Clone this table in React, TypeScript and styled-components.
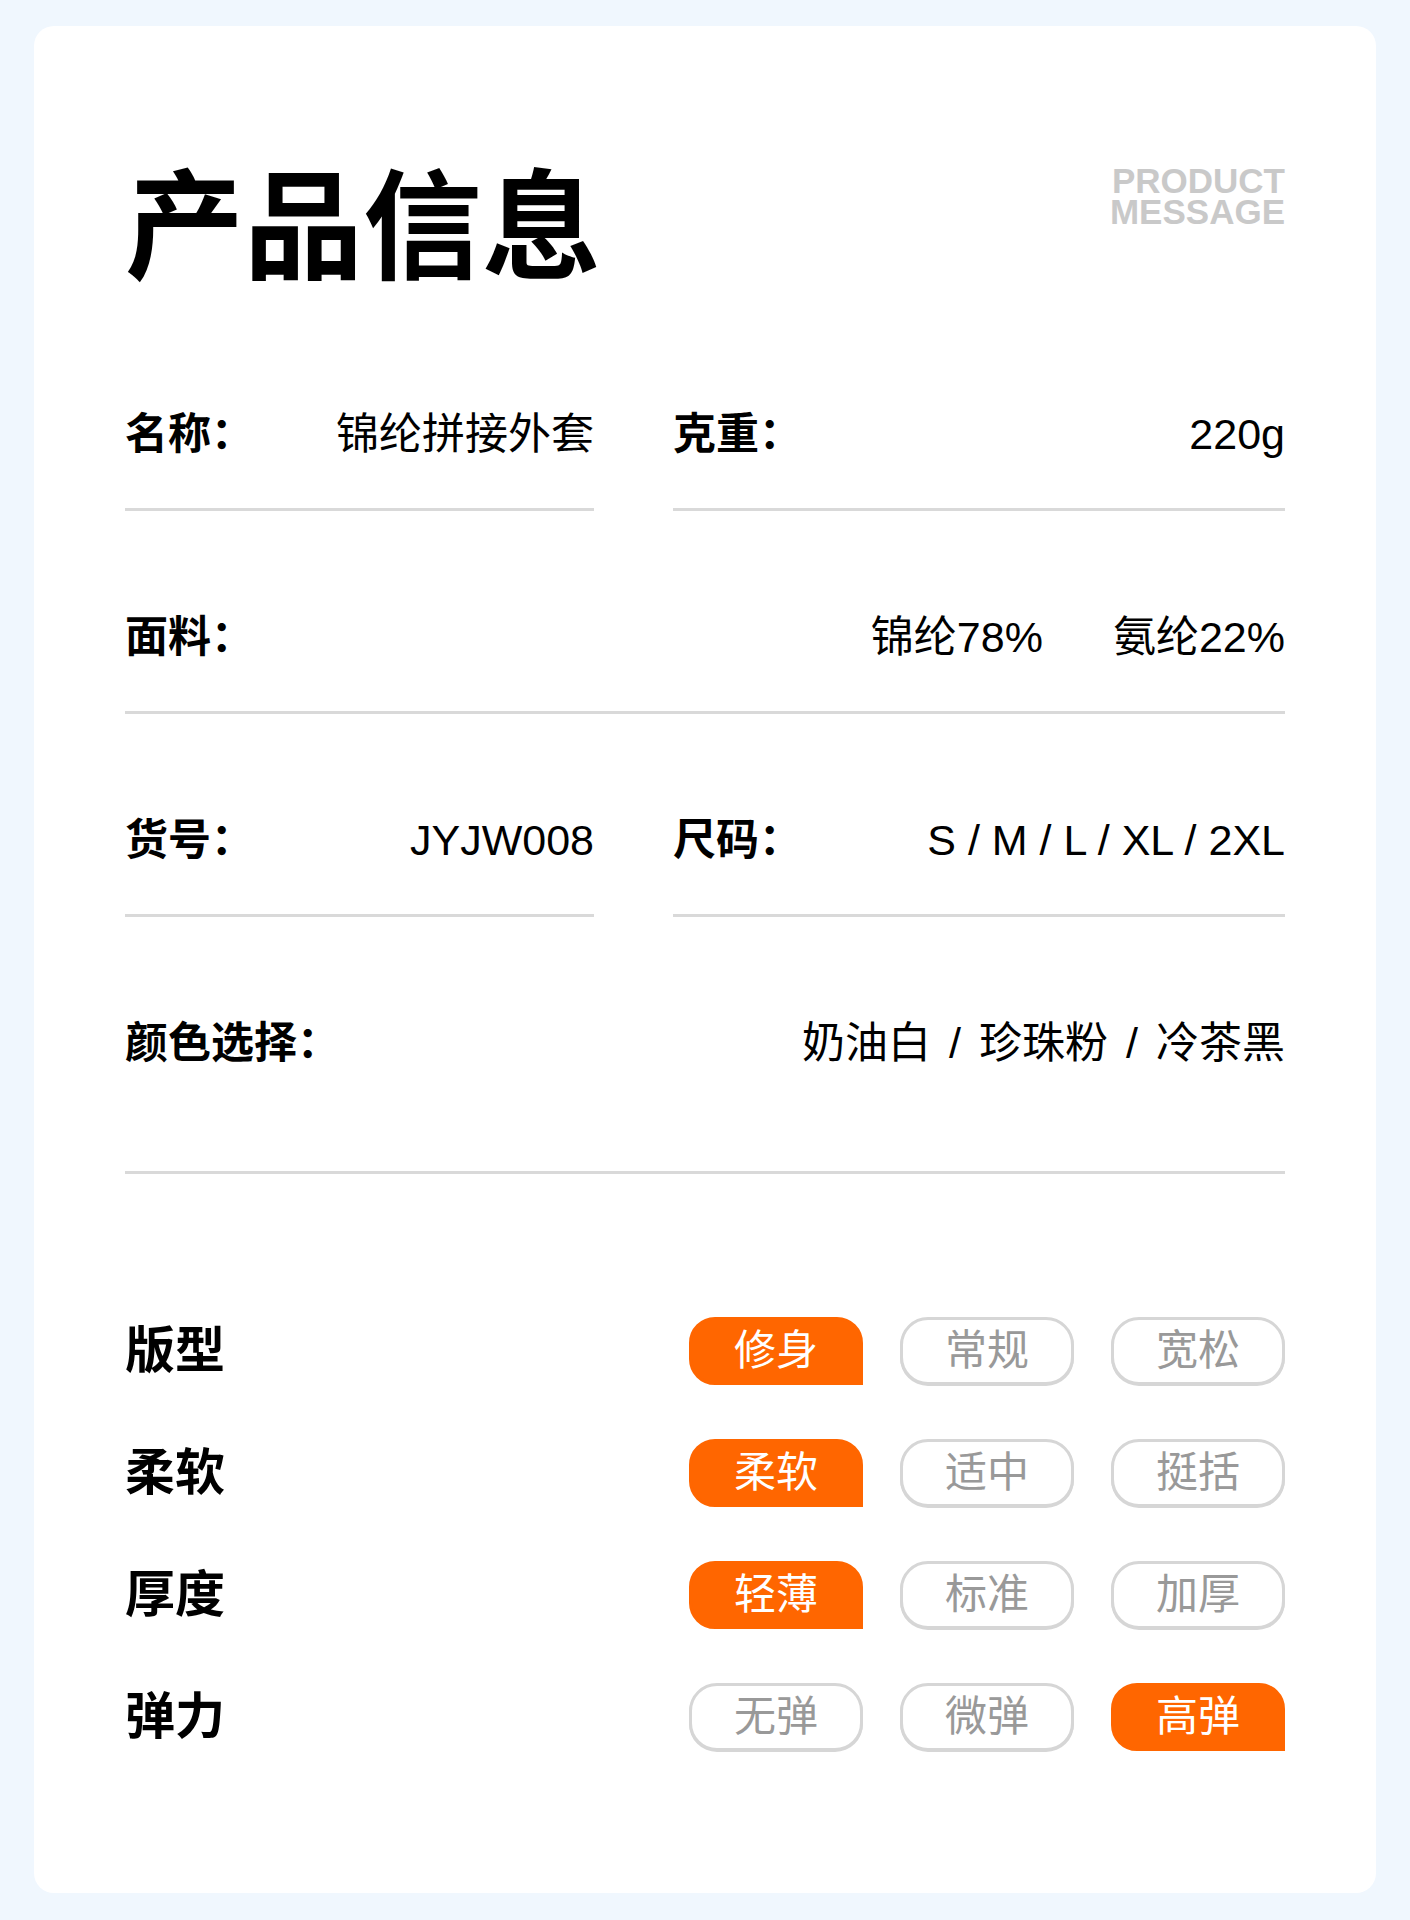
import React from 'react';
import styled, { createGlobalStyle } from 'styled-components';

const GlobalStyle = createGlobalStyle`
  html, body {
    margin: 0;
    padding: 0;
    background: #f0f7fe;
  }
  * {
    box-sizing: border-box;
  }
`;

const Page = styled.div`
  padding: 26px 34px 28px;
  font-family: "Liberation Sans", "Noto Sans CJK SC", sans-serif;
  color: #000;
`;

const Card = styled.div`
  background: #fff;
  border-radius: 20px;
  padding: 132px 91px 142px;
`;

const Header = styled.header`
  display: flex;
  justify-content: space-between;
  align-items: flex-start;
  margin-bottom: 30px;
`;

const Title = styled.h1`
  margin: 0;
  font-family: "Noto Sans CJK SC", sans-serif;
  font-size: 119px;
  line-height: 120px;
  font-weight: 700;
`;

const English = styled.div`
  margin-top: 7px;
  font-family: "Liberation Sans", Arial, sans-serif;
  font-size: 35px;
  font-weight: 700;
  color: #c9c9c9;
  text-align: right;
`;

const EnglishLine = styled.div`
  height: 31px;
  line-height: 31px;
`;

const InfoGrid = styled.div`
  display: grid;
  grid-template-columns: 469px 1fr;
  column-gap: 79px;
  margin-bottom: 143px;
`;

const Cell = styled.div<{ $full?: boolean; $tall?: boolean }>`
  grid-column: ${(p) => (p.$full ? '1 / -1' : 'auto')};
  display: flex;
  justify-content: space-between;
  align-items: center;
  padding: 96px 0 ${(p) => (p.$tall ? '98px' : '44px')};
  border-bottom: 3px solid #d9d9d9;
  font-size: 43px;
  line-height: 60px;
  white-space: nowrap;
`;

const Label = styled.span`
  font-weight: 700;
`;

const Value = styled.span`
  font-weight: 400;
`;

const ValueGroup = styled.span`
  display: flex;
  gap: 70px;
`;

const Sep = styled.span`
  margin: 0 18px;
`;

const AttrList = styled.div`
  display: flex;
  flex-direction: column;
  gap: 54px;
`;

const AttrRow = styled.div`
  display: flex;
  justify-content: space-between;
  align-items: center;
  height: 68px;
`;

const AttrName = styled.span`
  font-size: 50px;
  font-weight: 700;
  line-height: 68px;
`;

const Options = styled.div`
  display: flex;
  gap: 37px;
`;

const Pill = styled.span<{ $active?: boolean }>`
  display: flex;
  align-items: center;
  justify-content: center;
  width: 174px;
  height: 68px;
  font-size: 42px;
  line-height: 1;
  border: 3px solid ${(p) => (p.$active ? '#ff6600' : '#d6d6d6')};
  border-radius: ${(p) => (p.$active ? '26px 26px 0 26px' : '28px')};
  background: ${(p) => (p.$active ? '#ff6600' : '#fff')};
  color: ${(p) => (p.$active ? '#fff' : '#999')};
  box-shadow: ${(p) => (p.$active ? 'none' : '0 1px 0 #d6d6d6')};
`;

const attributes = [
  { name: '版型', options: ['修身', '常规', '宽松'], active: 0 },
  { name: '柔软', options: ['柔软', '适中', '挺括'], active: 0 },
  { name: '厚度', options: ['轻薄', '标准', '加厚'], active: 0 },
  { name: '弹力', options: ['无弹', '微弹', '高弹'], active: 2 },
];

const colors = ['奶油白', '珍珠粉', '冷茶黑'];

export default function App() {
  return (
    <>
      <GlobalStyle />
      <Page>
        <Card>
          <Header>
            <Title>产品信息</Title>
            <English>
              <EnglishLine>PRODUCT</EnglishLine>
              <EnglishLine>MESSAGE</EnglishLine>
            </English>
          </Header>

          <InfoGrid>
            <Cell>
              <Label>名称：</Label>
              <Value>锦纶拼接外套</Value>
            </Cell>
            <Cell>
              <Label>克重：</Label>
              <Value>220g</Value>
            </Cell>

            <Cell $full>
              <Label>面料：</Label>
              <ValueGroup>
                <Value>锦纶78%</Value>
                <Value>氨纶22%</Value>
              </ValueGroup>
            </Cell>

            <Cell>
              <Label>货号：</Label>
              <Value>JYJW008</Value>
            </Cell>
            <Cell>
              <Label>尺码：</Label>
              <Value>S / M / L / XL / 2XL</Value>
            </Cell>

            <Cell $full $tall>
              <Label>颜色选择：</Label>
              <Value>
                {colors.map((c, i) => (
                  <React.Fragment key={c}>
                    {i > 0 && <Sep>/</Sep>}
                    {c}
                  </React.Fragment>
                ))}
              </Value>
            </Cell>
          </InfoGrid>

          <AttrList>
            {attributes.map((attr) => (
              <AttrRow key={attr.name}>
                <AttrName>{attr.name}</AttrName>
                <Options>
                  {attr.options.map((opt, i) => (
                    <Pill key={opt} $active={i === attr.active}>
                      {opt}
                    </Pill>
                  ))}
                </Options>
              </AttrRow>
            ))}
          </AttrList>
        </Card>
      </Page>
    </>
  );
}
